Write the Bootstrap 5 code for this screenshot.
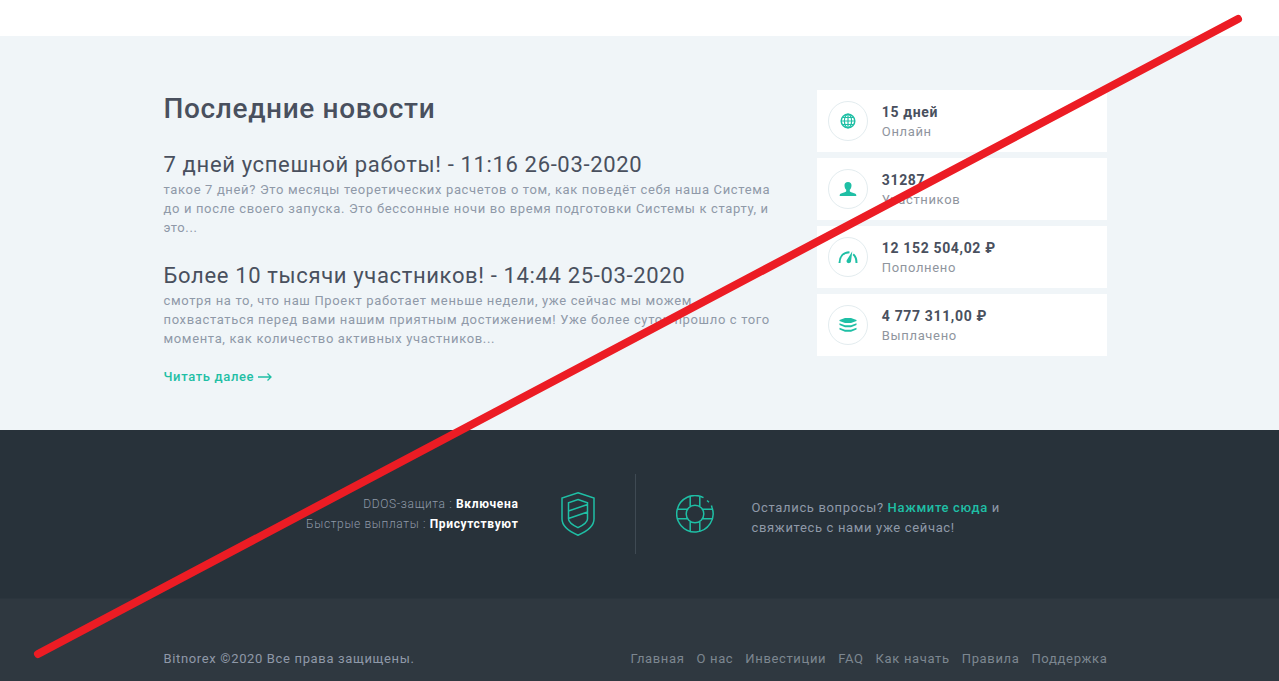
<!DOCTYPE html>
<html lang="ru">
<head>
<meta charset="utf-8">
<meta name="viewport" content="width=device-width, initial-scale=1">
<title>Bitnorex</title>
<link href="https://cdn.jsdelivr.net/npm/bootstrap@5.3.0/dist/css/bootstrap.min.css" rel="stylesheet">
<style>
body{font-family:Roboto,"Liberation Sans",sans-serif;font-size:13px;line-height:20px;letter-spacing:.05em;color:#8f99a8;background:#2f3840}
a{color:#1fbfa5;font-weight:500;text-decoration:none}
.wrap{max-width:952px;padding-right:8px}
.intro{height:36px}
.news{background:#f0f5f8;padding:54px 0 43px}
.news h2{font-size:28px;line-height:38px;font-weight:500;color:#49505e;margin-bottom:22px}
.news h3{font-size:22px;line-height:30px;font-weight:400;color:#49505e;margin:0}
.news article{margin-bottom:24px}
.news article:last-of-type{margin-bottom:19px}
.news article p{line-height:19px;margin:0}
.news .more{display:flex;align-items:center;gap:4px}
.stats{display:grid;gap:6px}
.stat{background:#fff;padding:11px;gap:14px;line-height:19px;color:#8f959e}
.stat strong{display:block;font-size:14px;line-height:20px;font-weight:700;color:#49505e}
.ring{width:40px;height:40px;border:1px solid #e3ecef;border-radius:50%;color:#1fbfa5}
.support{background:#28323a;padding:44px 0}
.support .halves{min-height:80px}
.guard{border-right:1px solid #3f4a53;gap:42px;padding-right:40px}
.guard-text{font-size:12px;font-weight:300}
.guard-text strong{font-weight:700;color:#fff}
.help{gap:38px;padding-left:40px}
.help p{max-width:260px}
.legal{padding:50px 0 12px;border-top:1px solid #2b353d}
.legal a{color:#7d8790;font-weight:400}
.legal nav{gap:4px 12px}
.strike{inset:0;width:100%;height:100%;pointer-events:none}
</style>
<script src="https://cdn.jsdelivr.net/npm/bootstrap@5.3.0/dist/js/bootstrap.bundle.min.js"></script>
</head>
<body class="position-relative">
<div class="intro bg-white"></div>
<main class="news">
  <div class="wrap container-fluid ps-0">
    <div class="row g-0">
      <section class="col-md-8 pe-3">
        <h2>Последние новости</h2>
        <article>
          <h3>7 дней успешной работы! - 11:16 26-03-2020</h3>
          <p>такое 7 дней? Это месяцы теоретических расчетов о том, как поведёт себя наша Система до и после своего запуска. Это бессонные ночи во время подготовки Системы к старту, и это...</p>
        </article>
        <article>
          <h3>Более 10 тысячи участников! - 14:44 25-03-2020</h3>
          <p>смотря на то, что наш Проект работает меньше недели, уже сейчас мы можем похвастаться перед вами нашим приятным достижением! Уже более суток прошло с того момента, как количество активных участников...</p>
        </article>
        <a class="more" href="#">Читать далее
          <svg width="14" height="10" viewBox="0 0 14 10" fill="none" stroke="currentColor" stroke-width="1.3" aria-hidden="true"><path d="M0 5h13M9.500 1.500 13 5 9.500 8.500"/></svg>
        </a>
      </section>
      <aside class="col-md-4 ps-md-4">
        <div class="stats">
          <div class="stat d-flex align-items-center">
            <span class="ring d-flex align-items-center justify-content-center flex-shrink-0"><svg width="16" height="16" viewBox="0 0 16 16" fill="none" stroke="currentColor" stroke-width="1.200"><circle cx="8" cy="8" r="6.800" stroke-width="1.500"/><ellipse cx="8" cy="8" rx="3.600" ry="6.800"/><path d="M8 1v14M1 8h14M2.300 4.500h11.400M2.300 11.500h11.400"/></svg></span>
            <div><strong>15 дней</strong>Онлайн</div>
          </div>
          <div class="stat d-flex align-items-center">
            <span class="ring d-flex align-items-center justify-content-center flex-shrink-0"><svg width="18" height="16" viewBox="0 0 18 16" fill="currentColor"><path d="M9 1C6.700 1 5.400 2.300 5.500 4.500c.1 2 .6 3.300 1.700 4.300v1.500c-.4 1.200-5.800 1.700-6.400 3.400-.2.700 0 1.300 0 1.300h16.400s.2-.6 0-1.300c-.6-1.700-6-2.200-6.400-3.400V8.800c1.100-1 1.600-2.300 1.700-4.300C12.600 2.300 11.300 1 9 1z"/></svg></span>
            <div><strong>31287</strong>Участников</div>
          </div>
          <div class="stat d-flex align-items-center">
            <span class="ring d-flex align-items-center justify-content-center flex-shrink-0"><svg width="20" height="14" viewBox="0 0 20 14" fill="none" stroke="currentColor" stroke-width="2"><path d="M1.500 13C1.500 7 5 2.500 11.500 2.200M15.200 4.300C17.300 6 18.500 9 18.500 13"/><path d="M14.300 1.200 13 11.500c-.3 1.300-1.900 2-3.100 1.600-1.300-.5-1.700-1.800-1-3z" fill="currentColor" stroke="none"/></svg></span>
            <div><strong>12 152 504,02 ₽</strong>Пополнено</div>
          </div>
          <div class="stat d-flex align-items-center">
            <span class="ring d-flex align-items-center justify-content-center flex-shrink-0"><svg width="18" height="16" viewBox="0 0 18 16" fill="currentColor"><path d="M.5 3 6 1h6l5.500 2v1L12 6H6L.5 4zM.5 6.200 6 8.300h6l5.500-2.100v1.900L12 10.300H6L.5 8.100zM.5 10.700 6 12.800h6l5.500-2.100v1.900L12 14.800H6L.5 12.600z"/></svg></span>
            <div><strong>4 777 311,00 ₽</strong>Выплачено</div>
          </div>
        </div>
      </aside>
    </div>
  </div>
</main>
<section class="support">
  <div class="wrap container-fluid ps-0">
    <div class="halves row g-0">
      <div class="guard col-6 d-flex align-items-center justify-content-end">
        <p class="guard-text text-end mb-0">DDOS-защита : <strong>Включена</strong><br>Быстрые выплаты : <strong>Присутствуют</strong></p>
        <svg class="flex-shrink-0" width="34" height="44" viewBox="0 0 34 44" fill="none" stroke="#1fbfa5" stroke-width="1.500" aria-hidden="true"><path d="M17 .8 33 6v21c0 7-6 12-16 16.200C7 39 1 34 1 27V6zM17 7.500l9.500 3.300V27c0 3.500-4 6-9.500 8.700C11.500 33 7.500 30.500 7.500 27V10.800zM7.500 19l19-6.500M7.500 26.500l19-6.500"/></svg>
      </div>
      <div class="help col-6 d-flex align-items-center">
        <svg class="flex-shrink-0" width="38" height="38" viewBox="0 0 38 38" fill="none" stroke="#1fbfa5" stroke-width="1.500" aria-hidden="true"><path d="M27.500 2.700A18.200 18.200 0 1 0 36 12.500l-.6-2M31 5.500l2 1.800"/><circle cx="19" cy="19" r="8.800"/><path d="M14.200 1.500v10M23.800 1.500v10M14.200 26.500v10M23.800 26.500v10M1.500 14.200h10M1.500 23.800h10M26.500 14.200h10M26.500 23.800h10"/></svg>
        <p class="mb-0 pt-2">Остались вопросы? <a href="#">Нажмите сюда</a> и свяжитесь с нами уже сейчас!</p>
      </div>
    </div>
  </div>
</section>
<footer class="legal">
  <div class="wrap container-fluid ps-0 d-flex flex-wrap justify-content-between">
    <span>Bitnorex ©2020 Все права защищены.</span>
    <nav class="d-flex flex-wrap">
      <a href="#">Главная</a><a href="#">О нас</a><a href="#">Инвестиции</a><a href="#">FAQ</a><a href="#">Как начать</a><a href="#">Правила</a><a href="#">Поддержка</a>
    </nav>
  </div>
</footer>
<svg class="strike position-absolute" viewBox="0 0 1279 681" preserveAspectRatio="none" aria-hidden="true"><path d="M38 654 1238 19" stroke="#ec1c24" stroke-width="8" stroke-linecap="round"/></svg>
</body>
</html>
